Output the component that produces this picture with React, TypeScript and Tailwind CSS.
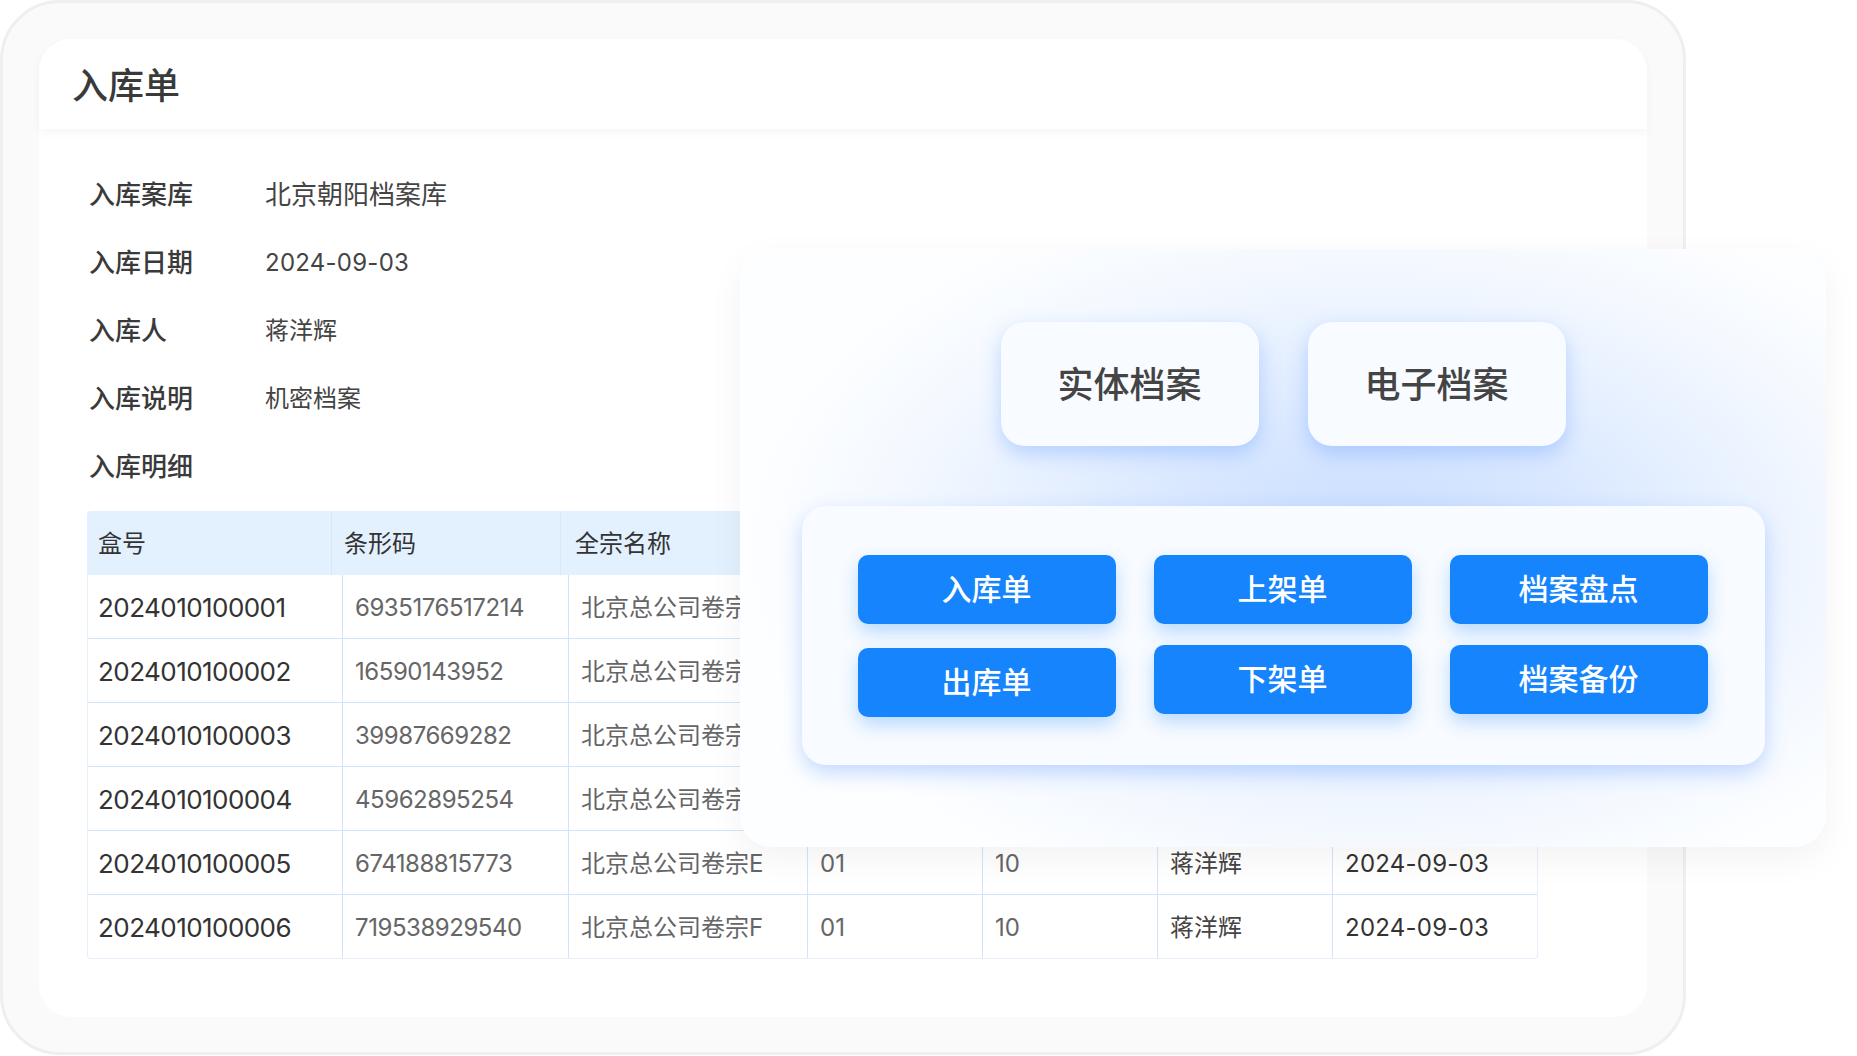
const font = "font-['Inter','Noto_Sans_CJK_SC',sans-serif]";

const formRows = [
  { label: "入库案库", value: "北京朝阳档案库", size: "text-[26px]" },
  { label: "入库日期", value: "2024-09-03", size: "pt-[2px] text-[24px] tracking-[0.25px]" },
  { label: "入库人", value: "蒋洋辉", size: "pt-[2px] text-[24px]" },
  { label: "入库说明", value: "机密档案", size: "pt-[2px] text-[24px]" },
  { label: "入库明细", value: "", size: "text-[24px]" },
];

const rows = [
  { box: "2024010100001", code: "6935176517214", name: "北京总公司卷宗A" },
  { box: "2024010100002", code: "16590143952", name: "北京总公司卷宗B" },
  { box: "2024010100003", code: "39987669282", name: "北京总公司卷宗C" },
  { box: "2024010100004", code: "45962895254", name: "北京总公司卷宗D" },
  { box: "2024010100005", code: "674188815773", name: "北京总公司卷宗E" },
  { box: "2024010100006", code: "719538929540", name: "北京总公司卷宗F" },
];

function Table() {
  return (
    <div className="mt-[11px] w-[1451px]">
      <div className="flex h-[64px] items-center rounded-t-[4px] bg-[#e3f0fe] text-[24px] text-[#333333]">
        <div className="flex h-full w-[245px] items-center border-r border-[#d8e6f8] pl-[11px] pt-[2px]">盒号</div>
        <div className="flex h-full w-[229px] items-center border-r border-[#d8e6f8] pl-[12px] pt-[2px]">条形码</div>
        <div className="flex h-full items-center pl-[14px] pt-[2px]">全宗名称</div>
      </div>
      <div className="rounded-b-[4px] border-x border-b border-[#e6effb]">
        {rows.map((r, i) => (
          <div
            key={r.box}
            className={`grid grid-cols-[255px_226px_239px_175px_175px_175px_1fr] text-[24px] text-[#666666] ${i < 5 ? "h-[64px] border-b border-[#d3e4fa]" : "h-[63px]"}`}
          >
            <div className="flex items-center border-r border-[#d3e4fa] pl-[10px] pt-[1px] text-[26px] tracking-[-0.55px] text-[#333333]">{r.box}</div>
            <div className="flex items-center border-r border-[#d3e4fa] pl-[12px] pt-[2px] tracking-[-0.45px]">{r.code}</div>
            <div className="flex items-center border-r border-[#d3e4fa] pl-[12px] pt-[2px]">{r.name}</div>
            {/* the floating panel covers these columns on the first four rows */}
            <div className="flex items-center border-r border-[#d3e4fa] pl-[12px] pt-[2px]">{i > 3 && "01"}</div>
            <div className="flex items-center border-r border-[#d3e4fa] pl-[12px] pt-[2px]">{i > 3 && "10"}</div>
            <div className="flex items-center border-r border-[#d3e4fa] pl-[12px] pt-[2px] text-[#444444]">{i > 3 && "蒋洋辉"}</div>
            <div className="flex items-center pl-[12px] pt-[2px] tracking-[0.25px] text-[#333333]">{i > 3 && "2024-09-03"}</div>
          </div>
        ))}
      </div>
    </div>
  );
}

function ActionButton({ text }: { text: string }) {
  return (
    <div className="flex h-[69px] w-[258px] items-center justify-center rounded-[10px] bg-[#1684fc] text-[30px] font-medium text-white shadow-[0_8px_18px_rgba(22,132,252,0.28)]">
      {text}
    </div>
  );
}

function FloatingPanel() {
  return (
    <div className="absolute left-[740px] top-[249px] flex h-[598px] w-[1086px] flex-col items-center rounded-[32px] bg-[radial-gradient(ellipse_58%_62%_at_58%_50%,#c6dcff_0%,#e0ecff_45%,#f3f8ff_75%,#fdfeff_100%)] shadow-[0_12px_36px_rgba(0,0,0,0.05)]">
      <div className="mt-[73px] flex gap-[49px]">
        {["实体档案", "电子档案"].map((t) => (
          <div
            key={t}
            className="flex h-[124px] w-[258px] items-center justify-center rounded-[24px] bg-[#f8fbff] pt-[2px] text-[36px] font-medium text-[#444444] shadow-[0_8px_20px_rgba(90,150,255,0.35)]"
          >
            {t}
          </div>
        ))}
      </div>
      <div className="mt-[60px] flex h-[259px] w-[963px] gap-[38px] rounded-[24px] bg-[#f8fbff] pl-[56px] pt-[49px] shadow-[0_8px_20px_rgba(90,150,255,0.35)]">
        <div className="flex flex-col gap-[24px]">
          <ActionButton text="入库单" />
          <ActionButton text="出库单" />
        </div>
        <div className="flex flex-col gap-[21px]">
          <ActionButton text="上架单" />
          <ActionButton text="下架单" />
        </div>
        <div className="flex flex-col gap-[21px]">
          <ActionButton text="档案盘点" />
          <ActionButton text="档案备份" />
        </div>
      </div>
    </div>
  );
}

export default function App() {
  return (
    <div className={`relative h-[1056px] w-[1857px] overflow-hidden bg-white ${font}`}>
      <div className="h-[1055px] w-[1686px] rounded-[60px] border-[3px] border-[#efefef] bg-[#fafafa] p-[36px]">
        <div className="h-[978px] w-[1608px] rounded-[32px] bg-white">
          <div className="flex h-[90px] items-center rounded-t-[32px] bg-white pl-[33px] pt-[4px] text-[36px] font-medium text-[#3a3a3a] shadow-[0_4px_10px_rgba(0,0,0,0.04)]">
            入库单
          </div>
          <div className="px-[48px] pt-[31px]">
            <div className="pl-[2px]">
              {formRows.map((row) => (
                <div key={row.label} className="flex h-[68px] items-center">
                  <div className="w-[176px] text-[26px] font-medium text-[#3a3a3a]">{row.label}</div>
                  <div className={`${row.size} text-[#444444]`}>{row.value}</div>
                </div>
              ))}
            </div>
            <Table />
          </div>
        </div>
      </div>
      <FloatingPanel />
    </div>
  );
}
